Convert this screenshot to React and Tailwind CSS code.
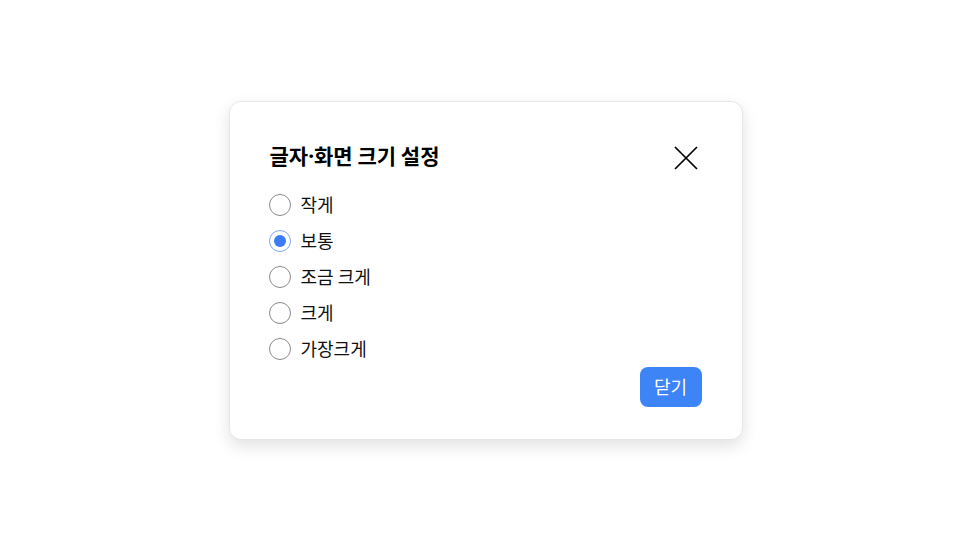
import { useState } from "react";

const options = ["작게", "보통", "조금 크게", "크게", "가장크게"];

export default function App() {
  const [size, setSize] = useState("보통");

  return (
    <div
      className="flex h-[540px] w-full items-center justify-center bg-white"
      style={{ fontFamily: '"Noto Sans CJK KR", "Noto Sans", sans-serif' }}
    >
      <div className="w-[514px] rounded-xl border border-gray-200 bg-white pl-[39px] pr-10 pt-10 pb-8 shadow-[0_6px_16px_rgba(0,0,0,0.12)]">
        <div className="flex h-7 items-center justify-between">
          <h2 className="ml-px text-[21px] leading-7 font-bold text-black">
            글자<span className="font-['Noto_Sans']">·</span>화면 크기 설정
          </h2>
          <button className="mt-1 flex h-7 w-8 items-center justify-center text-black">
            <svg width="24" height="24" viewBox="0 0 24 24" fill="none" stroke="currentColor" strokeWidth="1.7">
              <path d="M1 1 L23 23 M23 1 L1 23" />
            </svg>
          </button>
        </div>

        <div className="mt-[17px] flex flex-col">
          {options.map((o) => (
            <label key={o} className="flex h-9 cursor-pointer items-center gap-2.5" onClick={() => setSize(o)}>
              {size === o ? (
                <span className="flex h-[22px] w-[22px] items-center justify-center rounded-full border border-[#7fa9f7]">
                  <span className="h-3 w-3 rounded-full bg-[#3b7cf6]" />
                </span>
              ) : (
                <span className="h-[22px] w-[22px] rounded-full border border-[#8a8a8a]" />
              )}
              <span className="text-[18px] text-[#111]">{o}</span>
            </label>
          ))}
        </div>

        <div className="flex justify-end">
          <button className="h-10 w-[62px] rounded-lg bg-[#3d85f7] text-[18px] text-white">닫기</button>
        </div>
      </div>
    </div>
  );
}
